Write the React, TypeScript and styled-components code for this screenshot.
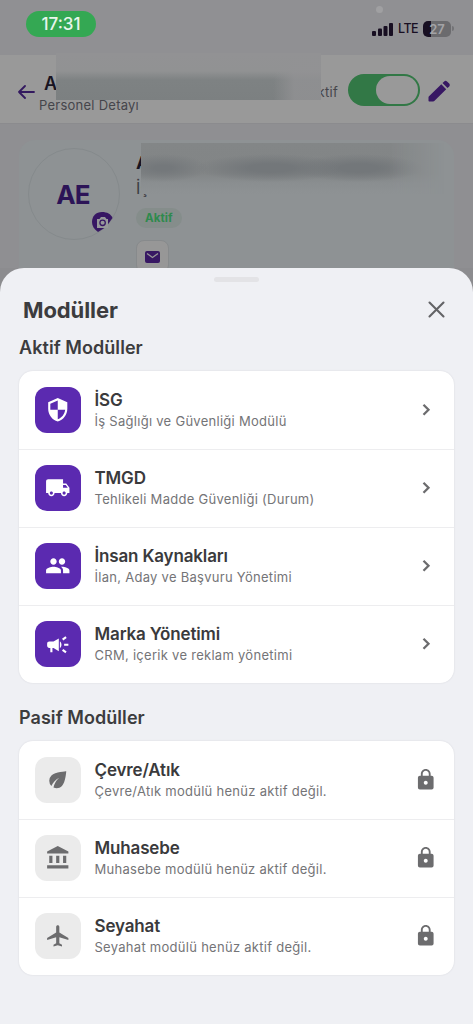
import React from 'react';
import styled, { createGlobalStyle } from 'styled-components';
import type { IconType } from 'react-icons';
import {
  MdAccountBalance,
  MdCampaign,
  MdEco,
  MdLocalAirport,
  MdLocalShipping,
  MdLock,
  MdPeople,
  MdSecurity,
} from 'react-icons/md';

const GlobalStyle = createGlobalStyle`
  * { box-sizing: border-box; }
  body {
    margin: 0;
    font-family: Inter, "Liberation Sans", sans-serif;
    background: #8f8f92;
  }
`;

const Screen = styled.div`
  width: 473px;
  height: 1024px;
  overflow: hidden;
  display: flex;
  flex-direction: column;
  background: #8f8f92;
`;

const Backdrop = styled.div`
  height: 268px;
  flex: none;
  display: flex;
  flex-direction: column;
  overflow: hidden;
`;

const StatusBar = styled.div`
  position: relative;
  height: 55px;
  flex: none;
  display: flex;
  justify-content: space-between;
  align-items: flex-start;
  padding: 11px 19px 0 26px;
  background: #909093;
`;

const CameraDot = styled.span`
  position: absolute;
  left: 376px;
  top: 6px;
  width: 7px;
  height: 7px;
  border-radius: 50%;
  background: #a0a0a2;
`;

const TimePill = styled.div`
  width: 70px;
  height: 26px;
  border-radius: 13px;
  background: #34a853;
  color: #e9f5ec;
  font-size: 17px;
  font-weight: 500;
  line-height: 26px;
  text-align: center;
`;

const StatusIcons = styled.div`
  display: flex;
  align-items: center;
  height: 17px;
  margin-top: 9px;
  color: #180f22;
`;

const Network = styled.span`
  margin-left: 4px;
  width: 20px;
  font-size: 12.5px;
  font-weight: 500;
  letter-spacing: -0.5px;
`;

const Battery = styled.div`
  width: 28px;
  height: 16px;
  margin-left: 5px;
  border-radius: 5px;
  background: linear-gradient(90deg, #180f22 8px, #6b6b6e 8px);
  color: #a3a3a6;
  font-size: 13px;
  font-weight: 600;
  line-height: 16px;
  text-align: center;
`;

const BatteryTip = styled.span`
  width: 2px;
  height: 5px;
  margin-left: 1px;
  border-radius: 0 2px 2px 0;
  background: #737376;
`;

const Header = styled.header`
  position: relative;
  height: 69px;
  flex: none;
  display: flex;
  align-items: center;
  padding: 5px 22px 0 18px;
  background: #999999;
  border-bottom: 1px solid #8b8b8e;
`;

const HeaderText = styled.div`
  display: flex;
  flex-direction: column;
  flex: 1;
  margin: 5px 0 0 4px;
`;

const HeaderName = styled.span`
  padding-left: 5px;
  font-size: 18px;
  line-height: 20px;
  font-weight: 600;
  color: #181421;
`;

const HeaderSub = styled.span`
  margin-top: 1px;
  font-size: 13px;
  line-height: 20px;
  letter-spacing: 0.25px;
  color: #45454b;
`;

const HeaderMask = styled.div`
  position: absolute;
  left: 56px;
  top: -2px;
  width: 265px;
  height: 47px;
  background:
    linear-gradient(90deg, transparent 82%, rgba(146, 146, 148, 0.8) 90%),
    linear-gradient(180deg, #929294 0, #919293 18px, #7e8283 27px, #7c8081 100%);
`;

const StateLabel = styled.span`
  margin-right: 10px;
  font-size: 13px;
  letter-spacing: 0.3px;
  color: #45454b;
`;

const Toggle = styled.div`
  width: 72px;
  height: 32px;
  padding: 2px;
  margin: -3px 8px 0 0;
  display: flex;
  justify-content: flex-end;
  border-radius: 16px;
  background: #327846;
`;

const ToggleThumb = styled.div`
  width: 42px;
  height: 28px;
  border-radius: 14px;
  background: #999999;
`;

const Profile = styled.section`
  display: flex;
  flex: 1;
  min-height: 0;
  position: relative;
  margin: 16px 19px 0;
  padding: 8px 9px 0;
  border-radius: 16px 16px 0 0;
  background: #8e9294;
`;

const Avatar = styled.div`
  position: relative;
  width: 92px;
  height: 92px;
  flex: none;
  border: 1px solid #858a8c;
  border-radius: 50%;
  display: flex;
  align-items: center;
  justify-content: center;
  padding-right: 2px;
  color: #2c1457;
  font-size: 26px;
  font-weight: 700;
  letter-spacing: -0.8px;
`;

const CameraBadge = styled.div`
  position: absolute;
  left: 62px;
  top: 62px;
  width: 22px;
  height: 22px;
  display: flex;
`;

const ProfileInfo = styled.div`
  display: flex;
  flex-direction: column;
  align-items: flex-start;
  margin-left: 16px;
`;

const ProfileName = styled.span`
  flex: none;
  margin-top: 3px;
  font-size: 18px;
  line-height: 24px;
  font-weight: 700;
  color: #181421;
`;

const ProfileRole = styled.span`
  flex: none;
  font-size: 16px;
  line-height: 26px;
  color: #3c3c42;
`;

const ProfileMask = styled.div`
  position: absolute;
  left: 122px;
  top: 3px;
  width: 310px;
  height: 51px;
  background:
    radial-gradient(ellipse 45px 14px at 22px 25px, #74787b 20%, transparent),
    radial-gradient(ellipse 75px 14px at 130px 25px, #73777a 30%, transparent),
    radial-gradient(ellipse 65px 14px at 218px 25px, #73777a 30%, transparent),
    linear-gradient(180deg, #838687 0, #828586 30px, #8a8e90 40px, #8e9294 51px);
  -webkit-mask-image: linear-gradient(90deg, #000 80%, transparent 98%);
  mask-image: linear-gradient(90deg, #000 80%, transparent 98%);
`;

const ActiveTag = styled.span`
  flex: none;
  height: 20px;
  margin-top: 7px;
  padding: 0 9px;
  border-radius: 10px;
  background: #858d8b;
  color: #2e8a4d;
  font-size: 11.5px;
  font-weight: 700;
  line-height: 20px;
  letter-spacing: 0.1px;
`;

const MailButton = styled.div`
  flex: none;
  width: 33px;
  height: 33px;
  margin-top: 12px;
  border-radius: 8px;
  border: 1px solid #878a8c;
  background: #979797;
  display: flex;
  align-items: center;
  justify-content: center;
`;

const SheetArea = styled.div`
  flex: 1;
  display: flex;
  background: #8c8c8f;
`;

const Sheet = styled.main`
  flex: 1;
  display: flex;
  flex-direction: column;
  padding: 9px 19px 0;
  border-radius: 24px 24px 0 0;
  background: #eff0f4;
`;

const Handle = styled.div`
  width: 45px;
  height: 5px;
  align-self: center;
  border-radius: 3px;
  background: #e3e3e6;
`;

const SheetHeader = styled.div`
  height: 54px;
  display: flex;
  justify-content: space-between;
  align-items: center;
  padding: 1px 9px 0 4px;
`;

const SheetTitle = styled.h1`
  margin: 0;
  font-size: 22px;
  font-weight: 700;
  letter-spacing: -0.1px;
  color: #3c3c3e;
`;

const SectionTitle = styled.h2<{ $gap?: number }>`
  margin: ${(p) => p.$gap ?? 0}px 0 0;
  height: 35px;
  font-size: 18px;
  font-weight: 600;
  line-height: 24px;
  letter-spacing: 0.06px;
  color: #3c3c3e;
`;

const Card = styled.div`
  flex: none;
  border-radius: 14px;
  background: #ffffff;
  box-shadow: 0 0 2px rgba(40, 40, 60, 0.12);
`;

const Row = styled.div`
  height: 78.1px;
  display: flex;
  align-items: center;
  padding: 0 16px;

  & + & {
    box-shadow: inset 0 1px 0 #ededef;
  }
`;

const IconTile = styled.div<{ $active: boolean }>`
  width: 46px;
  height: 46px;
  flex: none;
  border-radius: 12px;
  display: flex;
  align-items: center;
  justify-content: center;
  background: ${(p) => (p.$active ? '#5b2ab0' : '#ebebeb')};
  color: ${(p) => (p.$active ? '#ffffff' : '#6c6c6e')};
`;

const RowText = styled.div`
  flex: 1;
  display: flex;
  flex-direction: column;
  margin: 1px 0 0 13.5px;
`;

const RowTitle = styled.span`
  font-size: 17px;
  line-height: 22px;
  font-weight: 600;
  letter-spacing: -0.15px;
  color: #3a3a3c;
`;

const RowSub = styled.span`
  font-size: 13px;
  line-height: 21px;
  letter-spacing: 0.28px;
  color: #747477;
`;

const Trailing = styled.div`
  width: 24px;
  display: flex;
  justify-content: center;
  margin-top: -1px;
  color: #6c6c6e;
`;

interface Module {
  title: string;
  sub: string;
  icon: IconType;
}

const activeModules: Module[] = [
  { title: 'İSG', sub: 'İş Sağlığı ve Güvenliği Modülü', icon: MdSecurity },
  { title: 'TMGD', sub: 'Tehlikeli Madde Güvenliği (Durum)', icon: MdLocalShipping },
  { title: 'İnsan Kaynakları', sub: 'İlan, Aday ve Başvuru Yönetimi', icon: MdPeople },
  { title: 'Marka Yönetimi', sub: 'CRM, içerik ve reklam yönetimi', icon: MdCampaign },
];

const passiveModules: Module[] = [
  { title: 'Çevre/Atık', sub: 'Çevre/Atık modülü henüz aktif değil.', icon: MdEco },
  { title: 'Muhasebe', sub: 'Muhasebe modülü henüz aktif değil.', icon: MdAccountBalance },
  { title: 'Seyahat', sub: 'Seyahat modülü henüz aktif değil.', icon: MdLocalAirport },
];

function ModuleList({ items, active }: { items: Module[]; active: boolean }) {
  return (
    <Card>
      {items.map(({ title, sub, icon: Icon }) => (
        <Row key={title}>
          <IconTile $active={active}>
            <Icon size={25.5} />
          </IconTile>
          <RowText>
            <RowTitle>{title}</RowTitle>
            <RowSub>{sub}</RowSub>
          </RowText>
          <Trailing>
            {active ? (
              <svg width="24" height="24" viewBox="0 0 24 24" fill="none" stroke="currentColor" strokeWidth="2.3">
                <path d="M9.5 6.8 14.5 11.800l-5 5" />
              </svg>
            ) : (
              <MdLock size={23.5} />
            )}
          </Trailing>
        </Row>
      ))}
    </Card>
  );
}

export default function App() {
  return (
    <Screen>
      <GlobalStyle />
      <Backdrop>
        <StatusBar>
          <TimePill>17:31</TimePill>
          <CameraDot />
          <StatusIcons>
            <svg width="22" height="14" viewBox="0 0 22 14" fill="currentColor">
              <rect x="0" y="9" width="4" height="5" rx="1" />
              <rect x="6" y="6.5" width="4" height="7.5" rx="1" />
              <rect x="11.5" y="4" width="4" height="10" rx="1" />
              <rect x="17" y="1" width="4" height="13" rx="1" />
            </svg>
            <Network>LTE</Network>
            <Battery>27</Battery>
            <BatteryTip />
          </StatusIcons>
        </StatusBar>
        <Header>
          <svg width="17" height="14" viewBox="0 0 17 14" fill="none" stroke="#33195f" strokeWidth="1.8" strokeLinecap="round" strokeLinejoin="round">
            <path d="M16 7H1M7 1 1 7l6 6" />
          </svg>
          <HeaderText>
            <HeaderName>A</HeaderName>
            <HeaderSub>Personel Detayı</HeaderSub>
          </HeaderText>
          <StateLabel>Aktif</StateLabel>
          <Toggle>
            <ToggleThumb />
          </Toggle>
          <svg width="23" height="23" viewBox="0 0 23 23" fill="#371763">
            <path d="M1.500 21.500c-.6 0-1-.4-1-1v-3.200c0-.4.200-.8.500-1.100L13.300 4.300l4.900 4.900L6.300 21c-.3.300-.7.500-1.100.500z" />
            <path d="m14.500 3.100 1.700-1.700c.8-.8 2-.8 2.800 0l2.200 2.200c.8.800.8 2 0 2.800L19.500 8z" />
          </svg>
          <HeaderMask />
        </Header>
        <Profile>
          <Avatar>
            AE
            <CameraBadge>
              <svg width="22" height="22" viewBox="0 0 22 22">
                <path d="M7 21C3 18 1 15 1 11 1 5 5 1 11 1c5 0 9 2 10.500 6L15 16z" fill="#371763" />
                <path d="M6 8h2.500l1.500-2h4l1.500 2H17v9H6z" fill="#96989a" />
                <circle cx="11.6" cy="11.8" r="2.700" fill="#96989a" stroke="#371763" strokeWidth="1.3" />
              </svg>
            </CameraBadge>
          </Avatar>
          <ProfileInfo>
            <ProfileName>A</ProfileName>
            <ProfileRole>İş</ProfileRole>
            <ActiveTag>Aktif</ActiveTag>
            <MailButton>
              <svg width="15" height="12" viewBox="0 0 15 12">
                <rect width="15" height="12" rx="2" fill="#371763" />
                <path d="m2 2.500 5.500 4 5.500-4" fill="none" stroke="#979797" strokeWidth="1.3" />
              </svg>
            </MailButton>
          </ProfileInfo>
          <ProfileMask />
        </Profile>
      </Backdrop>
      <SheetArea>
        <Sheet>
          <Handle />
          <SheetHeader>
            <SheetTitle>Modüller</SheetTitle>
            <svg width="17" height="17" viewBox="0 0 17 17" fill="none" stroke="#636366" strokeWidth="2.1" strokeLinecap="round">
              <path d="m1.500 1.500 14 14M15.500 1.500l-14 14" />
            </svg>
          </SheetHeader>
          <SectionTitle>Aktif Modüller</SectionTitle>
          <ModuleList items={activeModules} active />
          <SectionTitle $gap={22.6}>Pasif Modüller</SectionTitle>
          <ModuleList items={passiveModules} active={false} />
        </Sheet>
      </SheetArea>
    </Screen>
  );
}
